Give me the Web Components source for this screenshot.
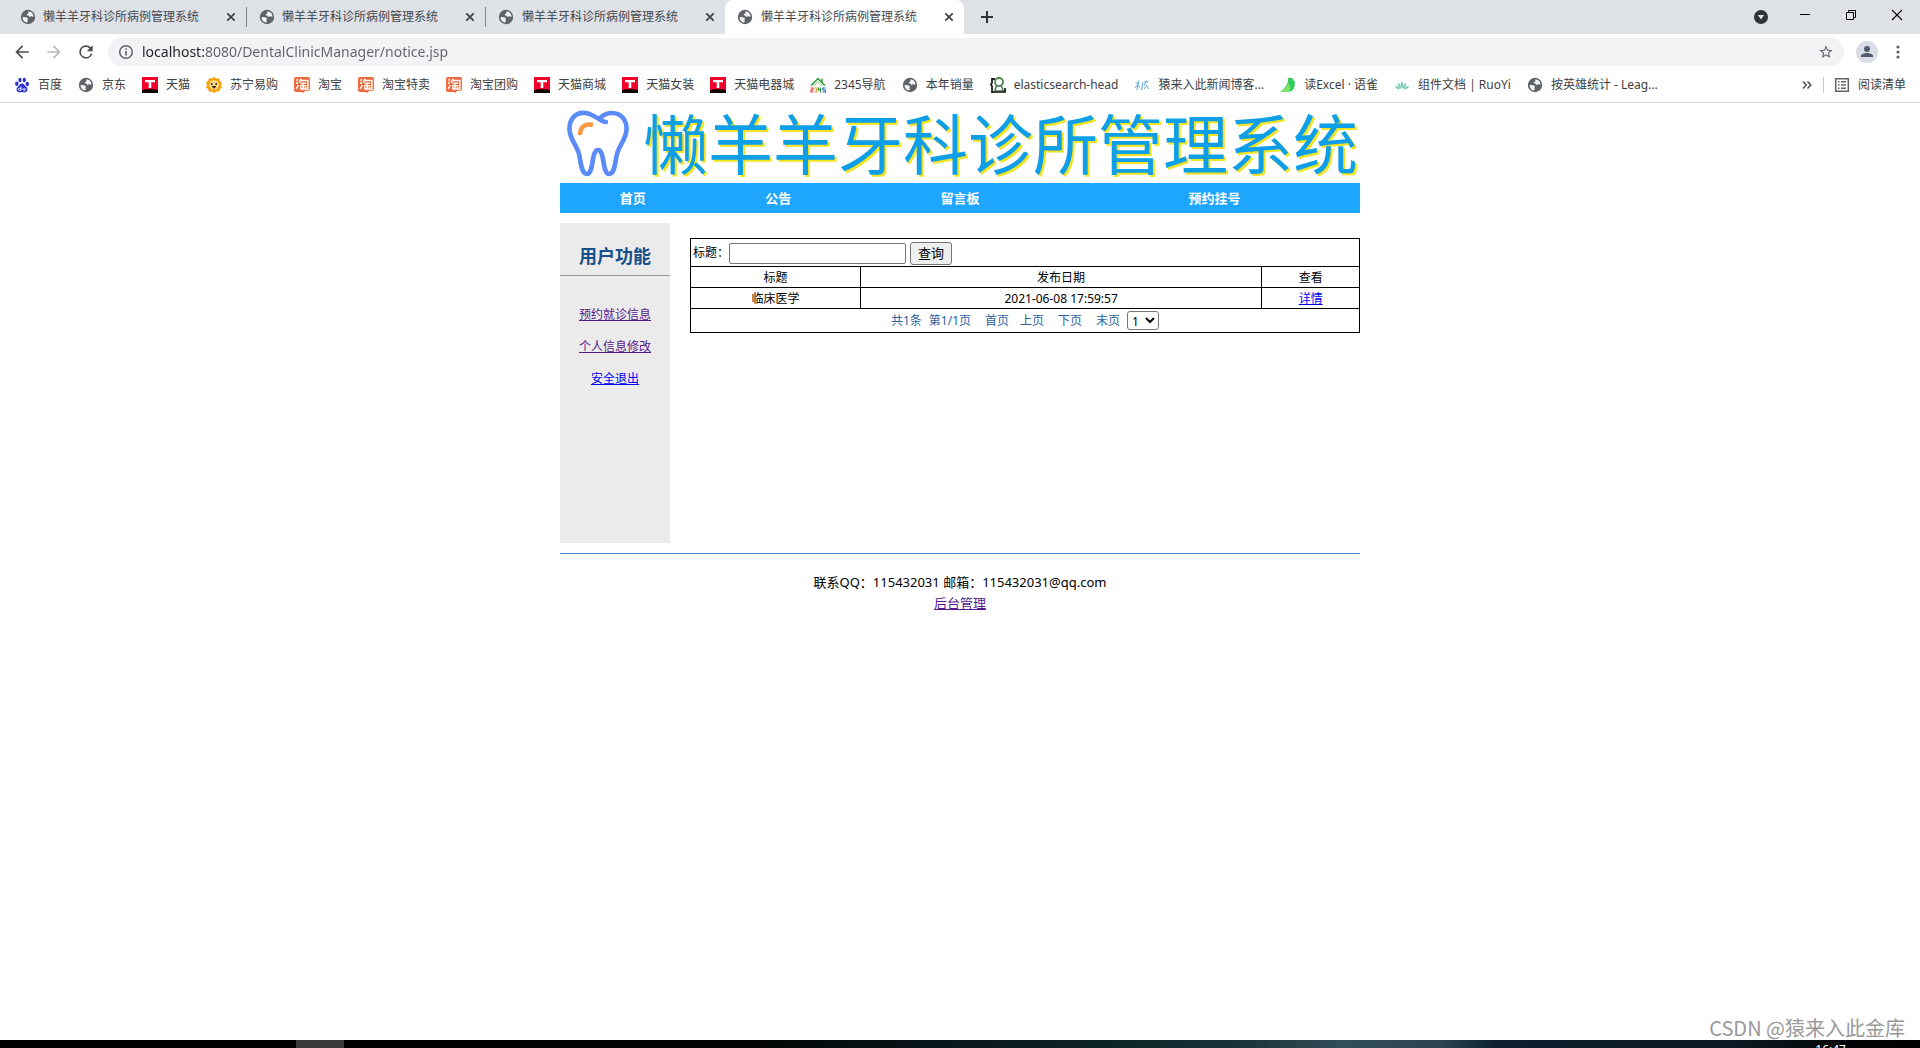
<!DOCTYPE html>
<html lang="zh-CN">
<head>
<meta charset="utf-8">
<title>懒羊羊牙科诊所病例管理系统</title>
<style>
html,body{height:100%}
body{margin:0;background:#fff;font:12px/16px "Noto Sans","Noto Sans CJK SC",sans-serif;color:#000}
</style>
</head>
<body>
<desktop-screen></desktop-screen>
<script>
const icons={
globe:['0 0 16 16','<circle cx="8" cy="8" r="7.200" fill="#5f6368"/><path d="M2.500 8.200c1.600-.5 3 .1 4.300.3 1 .2 1.300.9.900 1.700-.5.800-.2 1.500.1 2.100.1.700-.3 1.100-.8 1.200C4.300 13 2.500 10.800 2.500 8.200zM8.300 2.600c1.700-.2 3.400.7 4.400 2.100.5.900.8 1.800.8 2.800-.8.500-1.400-.2-2.200-.3-.8 0-1 .8-1.800.7-.7-.2-.6-1-1.200-1.300-.6-.2-1.500 0-1.500-.8 0-.9 1-.8 1.500-1.300.400-.600-.300-1.200 0-1.900z" fill="#f1f3f4"/>'],
baidu:['0 0 16 16','<g fill="#2a32d5"><ellipse cx="2.800" cy="6.800" rx="1.700" ry="2.300"/><ellipse cx="6" cy="3" rx="1.600" ry="2.300"/><ellipse cx="10.300" cy="3" rx="1.600" ry="2.300"/><ellipse cx="13.300" cy="7" rx="1.700" ry="2.200"/><path d="M8 6.400c2 0 2.600 2 4.200 3.300 1.900 1.700 1.600 5.300-1.200 5.500-1.300.1-2-.3-3-.3s-1.700.4-3 .3C2.200 15 1.900 11.400 3.800 9.700 5.400 8.400 6 6.400 8 6.400z"/></g><path d="M7 9.500v3.800H5.400a1 1 0 0 1 0-2H7M9 11v1.700q0 .6.600.6H11V11" fill="none" stroke="#fff" stroke-width=".9"/>'],
tmall:['0 0 16 16','<path fill="#f0022d" d="M0 0h16v13H0z"/><path d="M0 13q8-2 16 0v3H0z" fill="#100"/><path fill="#fff" d="M3 3h10v2.300H9.300V11H6.700V5.300H3z"/>'],
suning:['0 0 16 16','<path fill="#f9a10b" d="M8 0l2.200 1.500 2.700-.2.900 2.500L16 5.600 15 8l1 2.500-2.200 1.700-1 2.500-2.600-.2L8 16l-2.200-1.500-2.700.2-.9-2.500L0 10.400 1 8 0 5.500l2.200-1.700 1-2.500 2.600.2z"/><circle cx="8" cy="8" r="4.800" fill="#ffdc8a"/><circle cx="5.800" cy="7" r="1" fill="#321"/><circle cx="10.200" cy="7" r="1" fill="#321"/><path d="M5.500 9h5L8 12z" fill="#321"/>'],
taobao:['0 0 16 16','<path fill="#ef6a3c" d="M2 0h12q2 0 2 2v10q0 2-2 2h-3l-2 2-1-1H2q-2 0-2-2V2q0-2 2-2z"/><g fill="none" stroke="#fff" stroke-width="1.500"><path d="M2.400 2.500l1.600 1M2 5.500l1.700 1M2.200 12l2.200-4M7 1.800L5.200 5.600M6 3.500h7.800v9H12M6.500 6.200H12M6 8.800h6.300M9.200 6.200v5.300M6.800 10v2h4.800v-2"/></g>'],
nav2345:['0 0 16 16','<path d="M1 8.500L8 1.500l7 7M12 1.500v4" fill="none" stroke="#35a03a" stroke-width="1.500"/><path d="M4 9v-1l4-3.500L12 8v1" fill="none" stroke="#7ec680"/><g fill="none" stroke-width="1.100"><path stroke="#d33" d="M.5 11h2.500v2H1v2h2.500"/><path stroke="#e69b21" d="M4.500 11H7v4H4.500M5 13h2"/><path stroke="#2b9d3d" d="M8.500 10.500V13H11.500M10.500 10.500v5"/><path stroke="#2668c7" d="M15.500 11H13v2h2.500v2H12.500"/></g>'],
elastic:['0 0 16 16','<path d="M5 2H2v4L.8 7.500 2 9v6h3" fill="none" stroke="#222" stroke-width="1.800"/><circle cx="9" cy="5" r="4" fill="#fff" stroke="#4c8354" stroke-width="1.800"/><path d="M6.800 8L4.800 14h8.400L11 8" fill="none" stroke="#4c8354" stroke-width="1.600"/><path d="M5 15h10v-4" fill="none" stroke="#111" stroke-width="1.700"/>'],
ape:['0 0 16 16','<g fill="none" stroke="#6aa9dc" stroke-width="1"><path d="M4.500 3.500L3 13M1.500 6h4M4 7.500L.8 11M4 8l2 2.500M7.500 13L9 5M10 5h4.500M12.500 3.500L10 9M13 8l-3 4M13 9l1.500 3"/></g>'],
yuque:['0 0 16 16','<path fill="#31cc5b" d="M8 1c3-.8 5.500.5 6 3l1.500 1.200-1 .8c1 5-2 9-7 9H.5C4 12 9 7 8 1z"/><path fill="#7ee56b" d="M8.500 6C7 10 4 12 .5 15H7c3 0 5-3 1.500-9z"/>'],
lotus:['0 0 16 16','<g fill="#74c9b0"><path d="M8 12C6 9 7 5.500 8 4c1 1.500 2 5 0 8zM7 12C4.500 11 3.500 8 3.800 5.800 5.800 7 7 9 7 12zM9 12c2.500-1 3.500-4 3.200-6.200C10.200 7 9 9 9 12zM6 12.300C3.500 12.800 1.500 11 .8 9c2.200-.2 4.200 1 5.200 3.300zM10 12.300c2.500.5 4.500-1.300 5.200-3.300-2.200-.2-4.200 1-5.200 3.300z"/></g>'],
back:['0 0 24 24','<path fill="#4a4d51" d="M20 11H7.800l5.600-5.600L12 4l-8 8 8 8 1.400-1.400L7.800 13H20z"/>'],
forward:['0 0 24 24','<path fill="#b6b8bb" d="M12 4l-1.400 1.400 5.600 5.600H4v2h12.200l-5.600 5.600L12 20l8-8z"/>'],
reload:['0 0 24 24','<path fill="#4a4d51" d="M17.700 6.300A8 8 0 1 0 19.700 14h-2.100A6 6 0 1 1 12 6c1.700 0 3.100.7 4.200 1.800L13 11h7V4z"/>'],
info:['0 0 16 16','<circle cx="8" cy="8" r="6.300" fill="none" stroke="#5f6368" stroke-width="1.500"/><path d="M7.200 4.300h1.600v1.500H7.200zM7.200 7.100h1.600v4.500H7.200z" fill="#5f6368"/>'],
star:['0 0 24 24','<path fill="#5f6368" d="M22 9.240l-7.190-.62L12 2 9.190 8.630 2 9.240l5.460 4.730L5.820 21 12 17.270 18.180 21l-1.630-7.030zM12 15.400l-3.760 2.270 1-4.280-3.320-2.880 4.380-.38L12 6.100l1.710 4.040 4.380.38-3.320 2.880 1 4.280z"/>'],
user:['0 0 22 22','<circle cx="11" cy="11" r="11" fill="#dadce4"/><circle cx="11" cy="8" r="3" fill="#4f5b6b"/><path d="M5 16v-1c0-2 4-3 6-3s6 1 6 3v1z" fill="#4f5b6b"/>'],
dots:['0 0 16 16','<g fill="#5f6368"><circle cx="8" cy="3" r="1.600"/><circle cx="8" cy="8" r="1.600"/><circle cx="8" cy="13" r="1.600"/></g>'],
close:['0 0 16 16','<path d="M4.300 4.300l7.400 7.400M11.700 4.300l-7.400 7.400" stroke="#3c4043" stroke-width="1.700"/>'],
plus:['0 0 16 16','<path d="M8 2v12M2 8h12" stroke="#303336" stroke-width="2"/>'],
down:['0 0 16 16','<circle cx="8" cy="8" r="7" fill="#303338"/><path d="M4.800 6h6.400L8 10.500z" fill="#dee1e6"/>'],
min:['0 0 12 12','<path d="M1 5.500h10" stroke="#000"/>'],
restore:['0 0 12 12','<path d="M1.500 3.500h7v7h-7zM3.500 3V1.500h7v7H9" fill="none" stroke="#000"/>'],
exit:['0 0 12 12','<path d="M1 1l10 10M11 1L1 11" stroke="#000" stroke-width="1.100"/>'],
more:['0 0 12 12','<path d="M2 2.500L5.300 6 2 9.500M6.500 2.500L9.800 6 6.500 9.500" fill="none" stroke="#4a4d51" stroke-width="1.500"/>'],
list:['0 0 16 16','<path d="M1.700 1.700h12.600v12.600H1.700z" fill="none" stroke="#5f6368" stroke-width="1.500"/><path d="M4 4.700h1.500M7 4.700h5M4 8h1.500M7 8h5M4 11.300h1.500M7 11.300h5" stroke="#5f6368" stroke-width="1.500"/>'],
tooth:['0 0 64 68','<path d="M40 12C34 12 29 4 19 3 8 2 3 11 3.500 20c.5 9 7 15 9.500 24 2 8 2 20 8 20 7 0 4-24 11-24s4 24 11 24c6 0 6-12 8-20 2.500-9 9-15 9.500-24C61 11 56 3 46 3c-5 0-9 2-12 5" fill="none" stroke="#5a8bf6" stroke-width="4.600" stroke-linecap="round" stroke-linejoin="round"/><path d="M14 25c0-8 5-12 13-10" fill="none" stroke="#f99a43" stroke-width="4.500"/>']
};
const define=(name,html,ready)=>{
  const t=document.createElement('template');t.innerHTML=html;
  customElements.define(name,class extends HTMLElement{
    connectedCallback(){
      if(this.shadowRoot)return;
      const r=this.attachShadow({mode:'open'});
      r.append(t.content.cloneNode(true));
      if(ready)ready(r,this);
    }
  });
};

define('ui-icon','<style>:host{display:block;flex:none;width:16px;height:16px}div,svg{display:block;width:100%;height:100%}</style><div></div>',(r,h)=>{
  const [box,body]=icons[h.getAttribute('name')];
  r.querySelector('div').innerHTML=`<svg viewBox="${box}" aria-hidden="true">${body}</svg>`;
});

define('browser-tab',`<style>
:host{display:flex;align-items:center;box-sizing:border-box;width:239px;height:34px;padding:0 7px 0 12px;gap:8px;color:#45484d}
:host([active]){background:#fff;border-radius:8px 8px 0 0}
:host([divided])::after{content:"";width:1px;height:20px;background:#80858b}
:host([divided]){padding-right:0;gap:7px}
span{flex:1;white-space:nowrap}
button{border:0;background:none;padding:0}
</style><ui-icon name="globe"></ui-icon><span><slot></slot></span><button aria-label="关闭"><ui-icon name="close"></ui-icon></button>`);

define('tab-strip',`<style>
:host{display:flex;align-items:center;height:34px;background:#dee1e6;padding:0 17px 0 8px}
button{border:0;background:none;padding:0}
.new{margin-left:15px}
.win{margin-left:auto;display:flex;align-items:center;gap:34px}
.win button{padding-bottom:4px}
.win ui-icon{width:12px;height:12px}
.win .search{padding:0;margin-right:-4px}
.win .d{width:16px;height:16px}
</style>
<browser-tab divided>懒羊羊牙科诊所病例管理系统</browser-tab><browser-tab divided>懒羊羊牙科诊所病例管理系统</browser-tab><browser-tab>懒羊羊牙科诊所病例管理系统</browser-tab><browser-tab active>懒羊羊牙科诊所病例管理系统</browser-tab>
<button class="new" aria-label="新标签页"><ui-icon name="plus"></ui-icon></button>
<div class="win"><button class="search" aria-label="标签搜索"><ui-icon class="d" name="down"></ui-icon></button><button aria-label="最小化"><ui-icon name="min"></ui-icon></button><button aria-label="还原"><ui-icon name="restore"></ui-icon></button><button aria-label="关闭窗口"><ui-icon name="exit"></ui-icon></button></div>`);

define('address-bar',`<style>
:host{display:flex;align-items:center;height:36px;padding:0 14px 0 12px;gap:12px}
button{border:0;background:none;padding:0}
.nav{width:20px;height:20px}
.box{flex:1;display:flex;align-items:center;gap:8px;height:28px;border-radius:14px;background:#f1f3f4;padding:0 10px}
input{flex:1;border:0;outline:0;padding:0;font:14px/20px "Noto Sans",sans-serif;color:#5f6368;background:linear-gradient(to right,#202124 63px,#5f6368 63px);-webkit-background-clip:text;background-clip:text;-webkit-text-fill-color:transparent}
.user{width:22px;height:22px}
</style>
<button aria-label="后退"><ui-icon class="nav" name="back"></ui-icon></button><button aria-label="前进"><ui-icon class="nav" name="forward"></ui-icon></button><button aria-label="刷新"><ui-icon class="nav" name="reload"></ui-icon></button>
<div class="box"><ui-icon name="info"></ui-icon><input aria-label="地址" value="localhost:8080/DentalClinicManager/notice.jsp"><button aria-label="收藏"><ui-icon name="star"></ui-icon></button></div>
<button aria-label="用户"><ui-icon class="user" name="user"></ui-icon></button><button aria-label="菜单"><ui-icon name="dots"></ui-icon></button>`);

define('bookmark-link',`<style>:host{display:block;white-space:nowrap}a{display:flex;align-items:center;gap:8px;color:#3c4043;text-decoration:none}</style><a href="#"><i></i><span><slot></slot></span></a>`,(r,h)=>{
  const i=document.createElement('ui-icon');i.setAttribute('name',h.getAttribute('icon'));
  r.querySelector('i').replaceWith(i);
});

define('bookmarks-bar',`<style>
:host{display:flex;align-items:center;gap:16px;height:30px;padding:0 14px 2px;border-bottom:1px solid #d5d7da}
.end{margin-left:auto;display:flex;align-items:center;gap:10px}
.end>ui-icon{width:12px;height:12px}
.rule{width:1px;height:16px;background:#c4c7cb}
</style>
<bookmark-link icon="baidu">百度</bookmark-link><bookmark-link icon="globe">京东</bookmark-link><bookmark-link icon="tmall">天猫</bookmark-link><bookmark-link icon="suning">苏宁易购</bookmark-link><bookmark-link icon="taobao">淘宝</bookmark-link><bookmark-link icon="taobao">淘宝特卖</bookmark-link><bookmark-link icon="taobao">淘宝团购</bookmark-link><bookmark-link icon="tmall">天猫商城</bookmark-link><bookmark-link icon="tmall">天猫女装</bookmark-link><bookmark-link icon="tmall">天猫电器城</bookmark-link><bookmark-link icon="nav2345">2345导航</bookmark-link><bookmark-link icon="globe">本年销量</bookmark-link><bookmark-link icon="elastic">elasticsearch-head</bookmark-link><bookmark-link icon="ape">猿来入此新闻博客...</bookmark-link><bookmark-link icon="yuque">读Excel · 语雀</bookmark-link><bookmark-link icon="lotus">组件文档 | RuoYi</bookmark-link><bookmark-link icon="globe">按英雄统计 - Leag...</bookmark-link>
<div class="end"><ui-icon name="more"></ui-icon><i class="rule"></i><bookmark-link icon="list">阅读清单</bookmark-link></div>`);

define('site-banner',`<style>
:host{display:flex;align-items:flex-start;height:80px;gap:13px;padding-left:6px}
ui-icon{width:64px;height:68px;margin-top:7px}
h1{margin:0;font:400 65px/76px "Noto Sans CJK SC",sans-serif;color:#0f9fe8;text-shadow:2px 2px 0 #f2e422;white-space:nowrap}
</style><ui-icon name="tooth"></ui-icon><h1>懒羊羊牙科诊所管理系统</h1>`);

define('site-nav',`<style>
nav{display:flex;height:30px;background:#1ea6ff}
a{flex:2 1 0;display:flex;align-items:center;justify-content:center;color:#fff;font-weight:700;font-size:13px;text-decoration:none}
.m{flex-grow:3}.l{flex-grow:4}:host{display:block}
</style><nav><a href="#">首页</a><a href="#">公告</a><a class="m" href="#">留言板</a><a class="l" href="#">预约挂号</a></nav>`);

define('side-menu',`<style>
:host{display:block;width:110px;min-height:320px;background:#ebebeb;text-align:center}
h2{margin:0 0 31px;padding:20px 0 6px;font-size:18px;line-height:26px;color:#174f8b;border-bottom:1px solid #999}
nav{display:flex;flex-direction:column;align-items:center;gap:16px}
a{color:#551a8b}a.new{color:#00e}
</style><h2>用户功能</h2><nav><a href="#">预约就诊信息</a><a href="#">个人信息修改</a><a class="new" href="#">安全退出</a></nav>`);

define('notice-table',`<style>
:host{display:block;flex:1;padding-top:15px}
table{width:100%;border-collapse:collapse;table-layout:fixed}
th,td{border:1px solid #000;padding:1px 2px 0;font-weight:400;text-align:center;height:19px}
td.search{height:26px;text-align:left}td.pages{height:23px;padding-top:0}
form,.pager{display:flex;align-items:center}
label{display:flex;align-items:center}
input{box-sizing:border-box;width:177px;height:21px;margin-right:4px;border:1px solid #767676;border-radius:2px;padding:1px 2px;font:inherit}
button{height:23px;width:42px;padding:0;border:1px solid #767676;border-radius:3px;background:#efefef;font:13px/18px "Noto Sans","Noto Sans CJK SC",sans-serif}
.pager{justify-content:center;color:#2b5f9e;gap:14px}
.pager a{color:inherit;text-decoration:none}
.info,.end{display:flex;align-items:center;gap:7px}
.pair{display:flex;gap:11px}
select{box-sizing:border-box;height:19px;width:32px;padding:0;border:1px solid #767676;border-radius:3px;background:#fff;font:inherit}
td a{color:#00e}
</style>
<table><colgroup><col style="width:25.4%"><col style="width:60%"><col style="width:14.6%"></colgroup>
<tr><td class="search" colspan="3"><form onsubmit="return false"><label for="q">标题：</label><input id="q" type="text"><button>查询</button></form></td></tr>
<tr><th>标题</th><th>发布日期</th><th>查看</th></tr>
<tr><td>临床医学</td><td>2021-06-08 17:59:57</td><td><a href="#">详情</a></td></tr>
<tr><td class="pages" colspan="3"><div class="pager"><div class="info"><span>共1条</span><span>第1/1页</span></div><div class="pair"><a href="#">首页</a><a href="#">上页</a></div><a href="#">下页</a><div class="end"><a href="#">末页</a><select aria-label="页码"><option>1</option></select></div></div></td></tr></table>`);

define('site-footer',`<style>
:host{display:block;margin-top:10px;border-top:1px solid #4a90c8;padding-top:18px;text-align:center;font-size:13px;line-height:21px}
a{color:#551a8b}
</style><div>联系QQ：115432031 邮箱：115432031@qq.com</div><a href="#">后台管理</a>`);

define('clinic-page',`<style>
:host{display:block;width:800px;margin:0 auto}
.body{display:flex;gap:20px;margin-top:10px}
</style><site-banner></site-banner><site-nav></site-nav><div class="body"><side-menu></side-menu><notice-table></notice-table></div><site-footer></site-footer>`);

define('task-bar',`<style>
:host{display:block;height:8px;overflow:hidden;background:linear-gradient(90deg,#000 0,#020202 38%,#08181c 50%,#0d2527 58%,#183037 64%,#314d58 70%,#2b4650 75%,#0c1f2d 78%,#0b1b24 90%,#020405 96%,#000)}
div{display:flex;justify-content:space-between;padding:0 74px 0 296px}
i{width:48px;height:8px;background:#3b3b3b}
time{color:#fff;line-height:20px}
</style><div><i></i><time>16:47</time></div>`);

define('desktop-screen',`<style>
:host{display:flex;flex-direction:column;height:100vh;overflow:hidden}
main{flex:1;min-height:0;display:flex;flex-direction:column}
.mark{margin:auto 15px 0 auto;font:20px/24px "Noto Sans CJK SC",sans-serif;color:#999}
</style><tab-strip></tab-strip><address-bar></address-bar><bookmarks-bar></bookmarks-bar><main><clinic-page></clinic-page><div class="mark">CSDN @猿来入此金库</div></main><task-bar></task-bar>`);
</script>
</body>
</html>
